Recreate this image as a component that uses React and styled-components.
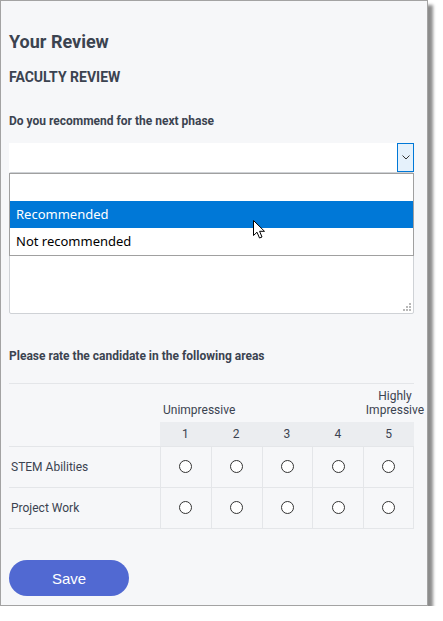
import styled, { createGlobalStyle } from 'styled-components';

const GlobalStyle = createGlobalStyle`
  html, body {
    margin: 0;
    padding: 0;
    background: #ffffff;
  }
  body {
    font-family: Roboto, "Liberation Sans", sans-serif;
  }
`;

const Frame = styled.div`
  width: 428px;
  height: 606px;
  background: #f6f7f9;
  border: 1px solid #a3a3a3;
  box-shadow: 5px 5px 3px rgba(0, 0, 0, 0.45);
  padding: 0 13px 0 8px;
  box-sizing: border-box;
  color: #3b4350;
`;

const Title = styled.h1`
  margin: 0;
  padding-top: 31px;
  font-size: 18px;
  font-weight: 700;
  line-height: 20px;
`;

const Section = styled.h2`
  margin: 17px 0 0;
  font-size: 14px;
  font-weight: 700;
  line-height: 16px;
  text-transform: uppercase;
`;

const Label = styled.div`
  margin-top: ${(p) => p.$top || 0}px;
  font-size: 12px;
  font-weight: 700;
  line-height: 14px;
`;

const SelectWrap = styled.div`
  position: relative;
  margin-top: 15px;
`;

const SelectBox = styled.div`
  display: flex;
  justify-content: flex-end;
  height: 29px;
  background: #ffffff;
`;

const SelectButton = styled.div`
  width: 17px;
  height: 29px;
  box-sizing: border-box;
  border: 1px solid #0078d7;
  background: #e5f1fb;
  display: flex;
  align-items: center;
  justify-content: center;
`;

const TextArea = styled.div`
  position: relative;
  height: 142px;
  background: #ffffff;
  border: 1px solid #cfd2d6;
  border-radius: 2px;
  box-sizing: border-box;
`;

const Grip = styled.svg`
  position: absolute;
  right: 2px;
  bottom: 2px;
`;

const Popup = styled.ul`
  position: absolute;
  left: 0;
  right: 0;
  top: 30px;
  margin: 0;
  padding: 0;
  list-style: none;
  background: #ffffff;
  border: 1px solid #a0a0a0;
  font-family: "Segoe UI", "Noto Sans", "Open Sans", sans-serif;
  font-size: 13px;
  color: #000000;
`;

const Option = styled.li`
  height: 27px;
  line-height: 27px;
  padding-left: 6px;
  background: ${(p) => (p.$active ? '#0078d7' : 'transparent')};
  color: ${(p) => (p.$active ? '#ffffff' : '#000000')};
`;

const Cursor = styled.svg`
  position: absolute;
  left: 244px;
  top: 77px;
`;

const Table = styled.div`
  margin-top: 20px;
  border-top: 1px solid #e4e6e9;
  display: grid;
  grid-template-columns: 151px repeat(5, minmax(0, 1fr));
  font-size: 12px;
`;

const HeadCell = styled.div`
  box-sizing: border-box;
  height: 38px;
  display: flex;
  align-items: flex-end;
  justify-content: ${(p) => (p.$right ? 'flex-end' : 'flex-start')};
  padding: 0 ${(p) => (p.$right ? '0' : '3px')} 5px;
  line-height: 14px;
  white-space: ${(p) => (p.$wrap ? 'normal' : 'nowrap')};
`;

const Overflow = styled.span`
  display: block;
  margin-right: -11px;
  width: 60px;
  flex-shrink: 0;
  text-align: center;
`;

const NumCell = styled.div`
  height: 24px;
  background: #ebedf0;
  display: flex;
  align-items: center;
  justify-content: center;
  font-size: 12px;
`;

const RowLabel = styled.div`
  box-sizing: border-box;
  height: ${(p) => (p.$last ? 42 : 41)}px;
  display: flex;
  align-items: center;
  padding-left: 2px;
  border-top: 1px solid #e4e6e9;
  border-bottom: ${(p) => (p.$last ? '1px solid #e4e6e9' : 'none')};
  font-size: 12px;
`;

const RadioCell = styled.div`
  box-sizing: border-box;
  height: ${(p) => (p.$last ? 42 : 41)}px;
  display: flex;
  align-items: center;
  justify-content: center;
  border-top: 1px solid #e4e6e9;
  border-left: 1px solid #e4e6e9;
  border-right: ${(p) => (p.$end ? '1px solid #e4e6e9' : 'none')};
  border-bottom: ${(p) => (p.$last ? '1px solid #e4e6e9' : 'none')};
`;

const Radio = styled.span`
  width: 11px;
  height: 11px;
  border: 1px solid #333333;
  border-radius: 50%;
  background: #ffffff;
  margin-top: -2px;
`;

const SaveButton = styled.button`
  display: block;
  margin-top: 31px;
  width: 120px;
  height: 36px;
  border: none;
  border-radius: 18px;
  background: #5169d2;
  color: #ffffff;
  font-family: "Liberation Sans", Arial, sans-serif;
  font-size: 15px;
`;

const criteria = ['STEM Abilities', 'Project Work'];
const scale = [1, 2, 3, 4, 5];

function App() {
  return (
    <>
      <GlobalStyle />
      <Frame>
        <Title>Your Review</Title>
        <Section>Faculty Review</Section>
        <Label $top={29}>Do you recommend for the next phase</Label>

        <SelectWrap>
          <SelectBox>
            <SelectButton>
              <svg width="8" height="5" viewBox="0 0 8 5">
                <path d="M0.5 0.5 L4 4 L7.5 0.5" fill="none" stroke="#333" strokeWidth="1" />
              </svg>
            </SelectButton>
          </SelectBox>
          <TextArea>
            <Grip width="8" height="8" viewBox="0 0 8 8">
              <g fill="#b8b8b8">
                <rect x="6" y="0" width="2" height="2" />
                <rect x="3" y="3" width="2" height="2" />
                <rect x="6" y="3" width="2" height="2" />
                <rect x="0" y="6" width="2" height="2" />
                <rect x="3" y="6" width="2" height="2" />
                <rect x="6" y="6" width="2" height="2" />
              </g>
            </Grip>
          </TextArea>
          <Popup>
            <Option>&nbsp;</Option>
            <Option $active>Recommended</Option>
            <Option>Not recommended</Option>
          </Popup>
          <Cursor width="13" height="20" viewBox="0 0 13 20">
            <path
              d="M0.5 0.5 L0.5 15.5 L4 12.2 L6.5 18 L9 17 L6.6 11.3 L11.5 11.3 Z"
              fill="#ffffff"
              stroke="#000000"
              strokeWidth="1"
              strokeLinejoin="round"
            />
          </Cursor>
        </SelectWrap>

        <Label $top={35}>Please rate the candidate in the following areas</Label>

        <Table>
          <HeadCell />
          <HeadCell>Unimpressive</HeadCell>
          <HeadCell />
          <HeadCell />
          <HeadCell />
          <HeadCell $right $wrap>
            <Overflow>Highly Impressive</Overflow>
          </HeadCell>

          <div />
          {scale.map((n) => (
            <NumCell key={n}>{n}</NumCell>
          ))}

          {criteria.map((c, i) => {
            const last = i === criteria.length - 1;
            return [
              <RowLabel key={c} $last={last}>{c}</RowLabel>,
              ...scale.map((n) => (
                <RadioCell key={c + n} $last={last} $end={n === 5}>
                  <Radio />
                </RadioCell>
              )),
            ];
          })}
        </Table>

        <SaveButton>Save</SaveButton>
      </Frame>
    </>
  );
}

export default App;
